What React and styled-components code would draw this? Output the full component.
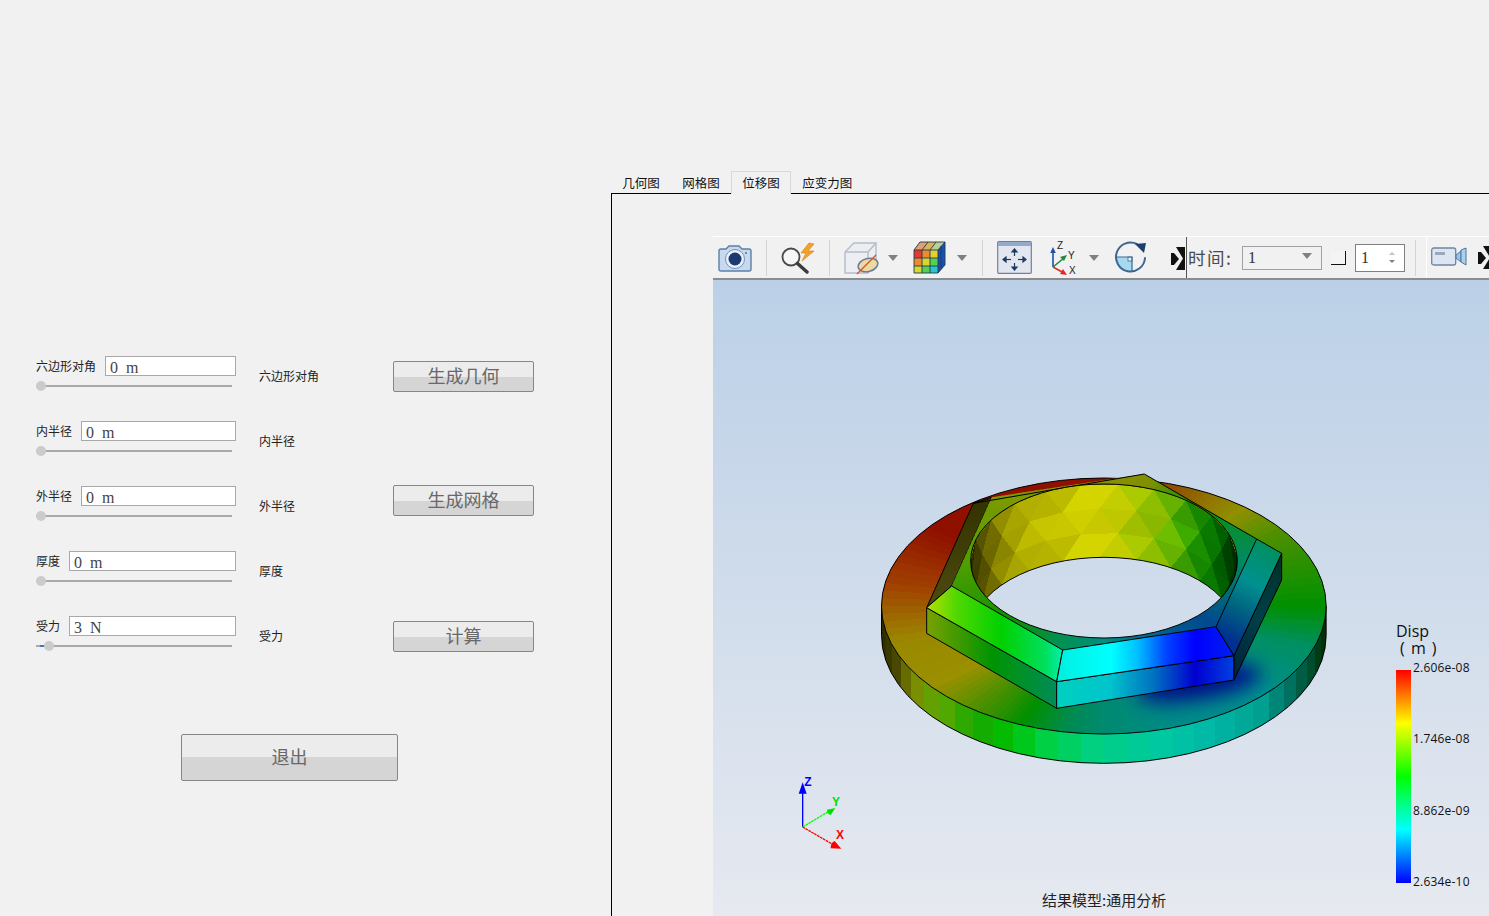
import React from 'react'
import styled, { createGlobalStyle } from 'styled-components'

const Global = createGlobalStyle`
  html, body { margin: 0; padding: 0; background: #f1f1f1; overflow: hidden; }
  body { width: 1489px; height: 916px; font-family: "Noto Sans CJK SC", "Noto Sans", sans-serif; }
`

const Page = styled.div`
  display: flex;
  width: 1489px;
  height: 916px;
  overflow: hidden;
  background: #f1f1f1;
`

/* ---------- left form ---------- */
const LeftPanel = styled.div`
  width: 611px;
  flex: none;
  padding: 356px 0 0 36px;
  box-sizing: border-box;
`
const FieldRow = styled.div`
  display: grid;
  grid-template-columns: 223px 134px 141px;
  height: 65px;
`
const FieldCol = styled.div`
  display: flex;
  flex-direction: column;
  width: 200px;
`
const FieldTop = styled.div`
  display: flex;
  align-items: center;
  gap: 9px;
`
const FieldLabel = styled.span`
  font-size: 12px;
  line-height: 20px;
  color: #222;
  white-space: nowrap;
`
const ValueInput = styled.div`
  flex: 1;
  height: 20px;
  box-sizing: border-box;
  border: 1px solid #a9a9a9;
  background: #fff;
  padding-left: 4px;
  font-family: "Liberation Serif", serif;
  font-size: 16px;
  line-height: 21px;
  color: #444;
  word-spacing: 4px;
`
const Slider = styled.div`
  position: relative;
  width: 196px;
  height: 2px;
  margin-top: 9px;
  background: #a9a9a9;
`
const SliderFill = styled.div`
  position: absolute;
  left: 4px;
  top: 0;
  width: 4px;
  height: 2px;
  background: #3a78c8;
`
const SliderHandle = styled.div`
  position: absolute;
  left: ${p => p.$left}px;
  top: -4px;
  width: 10px;
  height: 10px;
  border-radius: 50%;
  background: #cbcbcb;
`
const EchoLabel = styled.span`
  font-size: 12px;
  line-height: 16px;
  margin-top: 12px;
  color: #222;
  white-space: nowrap;
`
const PushButton = styled.div`
  display: flex;
  align-items: center;
  justify-content: center;
  width: ${p => p.$w}px;
  height: ${p => p.$h}px;
  margin-top: ${p => p.$mt || 0}px;
  margin-left: ${p => p.$ml || 0}px;
  padding-bottom: 3px;
  box-sizing: border-box;
  border: 1px solid #868686;
  border-radius: 2px;
  background: linear-gradient(#ececec 0 50%, #d5d5d5 50% 100%);
  font-size: 18px;
  line-height: 20px;
  color: #686868;
`
const ExitWrap = styled.div`
  margin-top: 53px;
`

/* ---------- right side ---------- */
const RightPanel = styled.div`
  flex: 1;
  min-width: 0;
  padding-top: 171px;
  display: flex;
  flex-direction: column;
`
const Tabs = styled.div`
  display: flex;
  height: 22px;
  flex: none;
  align-items: stretch;
`
const Tab = styled.div`
  padding: 1px 10.25px 0;
  font-size: 12.5px;
  line-height: 19px;
  color: #111;
  box-sizing: border-box;
  white-space: nowrap;
  border: 1px solid ${p => (p.$active ? '#d8d8d8' : 'transparent')};
  border-bottom: ${p => (p.$active ? '1px solid #f1f1f1' : '0')};
  margin-bottom: ${p => (p.$active ? '-1px' : '0')};
  position: relative;
  z-index: 1;
`
const TabPane = styled.div`
  flex: 1;
  border-top: 1px solid #000;
  border-left: 1px solid #000;
  padding: 42px 0 0 101px;
  display: flex;
  flex-direction: column;
  min-height: 0;
`
const Toolbar = styled.div`
  display: flex;
  align-items: center;
  height: 44px;
  flex: none;
  box-sizing: border-box;
  border-top: 1px solid #fff;
  border-bottom: 2px solid #8c8c8c;
  background: #f1f1f1;
  overflow: hidden;
`
const Tool = styled.svg`
  flex: none;
  display: block;
  margin-left: ${p => p.$ml || 0}px;
  margin-bottom: ${p => p.$mb || 0}px;
`
const Sep = styled.div`
  flex: none;
  width: 1px;
  height: 36px;
  margin-left: ${p => p.$ml}px;
  background: #d4d4d4;
`
const ToolGrip = styled.div`
  flex: none;
  width: 1px;
  height: 44px;
  margin-left: ${p => p.$ml}px;
  background: #555;
`
const TimeLabel = styled.span`
  flex: none;
  width: 44px;
  margin-left: 1px;
  font-size: 17.5px;
  line-height: 20px;
  letter-spacing: 1.5px;
  color: #4a4a4a;
  white-space: nowrap;
`
const Combo = styled.div`
  flex: none;
  display: flex;
  align-items: center;
  justify-content: space-between;
  width: 80px;
  height: 24px;
  margin-left: 10px;
  padding: 0 9px 0 5px;
  box-sizing: border-box;
  border: 1px solid #a0a0a0;
  font-family: "Liberation Serif", serif;
  font-size: 16px;
  color: #333;
`
const MiniButton = styled.div`
  flex: none;
  width: 15px;
  height: 14px;
  margin-left: 9px;
  box-sizing: border-box;
  background: #f4f4f4;
  border-right: 1px solid #111;
  border-bottom: 1px solid #111;
`
const Spin = styled.div`
  flex: none;
  display: flex;
  align-items: center;
  justify-content: space-between;
  width: 50px;
  height: 28px;
  margin-left: 9px;
  padding: 0 9px 0 5px;
  box-sizing: border-box;
  border: 1px solid #808080;
  background: #fff;
  font-family: "Liberation Serif", serif;
  font-size: 16px;
  color: #333;
`
const SpinArrows = styled.div`
  display: flex;
  flex-direction: column;
  gap: 5px;
`
const SpinArrow = styled.div`
  width: 0;
  height: 0;
  border-left: 3px solid transparent;
  border-right: 3px solid transparent;
  ${p => (p.$up ? 'border-bottom: 3px solid #c0c0c0;' : 'border-top: 3px solid #808080;')}
`
const SecondBar = styled.div`
  flex: none;
  display: flex;
  align-items: center;
  height: 42px;
  margin-left: 10px;
  padding-left: 4px;
  margin-top: -1px;
  border-left: 1px solid #fff;
`
const Viewport = styled.div`
  position: relative;
  flex: 1;
  overflow: hidden;
  background: linear-gradient(#bbd0e7, #e6e9f0);
`
const ModelSvg = styled.svg`
  position: absolute;
  left: 147px;
  top: 180px;
  width: 490px;
  height: 320px;
  overflow: visible;
`
const AxesSvg = styled.svg`
  position: absolute;
  left: 67px;
  top: 485px;
  width: 90px;
  height: 95px;
`
const Legend = styled.div`
  position: absolute;
  left: 683px;
  top: 343px;
  font-family: "Open Sans", "Noto Sans", sans-serif;
  color: #111;
`
const LegendTitle = styled.div`
  font-size: 16px;
  line-height: 17px;
`
const LegendUnit = styled.div`
  font-size: 16px;
  line-height: 17px;
  padding-left: 4px;
  word-spacing: 2px;
  white-space: pre;
`
const LegendBody = styled.div`
  display: flex;
  gap: 2px;
  margin-top: 13px;
`
const ColorBar = styled.div`
  width: 15px;
  height: 213px;
  background: linear-gradient(#ff0000 0%, #ffff00 25%, #00ff00 50%, #00ffff 75%, #0000ff 100%);
`
const LegendTicks = styled.div`
  display: flex;
  flex-direction: column;
  justify-content: space-between;
  height: 230px;
  margin-top: -10px;
  font-size: 12px;
  line-height: 16px;
  letter-spacing: .2px;
  white-space: nowrap;
`
const Caption = styled.div`
  position: absolute;
  left: 329px;
  top: 610px;
  font-size: 15px;
  line-height: 20px;
  color: #222;
  white-space: nowrap;
`

/* ---------- colour helpers for the model ---------- */
const hex = h => [1, 3, 5].map(i => parseInt(h.slice(i, i + 2), 16))
const ramp = stops => v => {
  if (v <= stops[0][0]) return hex(stops[0][1])
  for (let i = 1; i < stops.length; i++) {
    if (v <= stops[i][0]) {
      const a = stops[i - 1]
      const b = stops[i]
      const f = (v - a[0]) / (b[0] - a[0])
      const ca = hex(a[1])
      const cb = hex(b[1])
      return ca.map((c, k) => c + (cb[k] - c) * f)
    }
  }
  return hex(stops[stops.length - 1][1])
}
const rgb = (c, s = 1) => `rgb(${c.map(x => Math.min(255, Math.round(x * s))).join(',')})`

const CX = 731.5
const CY = 438
const RX = 667
const RY = 384
const HX = 732
const HY = 303
const HRX = 400
const HRY = 231
const rad = d => (d * Math.PI) / 180

const sideColor = ramp([
  [65, '#2a2a00'], [110, '#484800'], [160, '#808800'], [210, '#66a000'], [260, '#50a800'],
  [350, '#18a800'], [450, '#00c000'], [550, '#00d040'], [700, '#00d080'], [900, '#00c8a0'],
  [1050, '#00b8a8'], [1200, '#00a090'], [1290, '#007060'], [1350, '#005030'], [1398, '#002c00'],
])
const sideStrips = []
for (let t = 0; t < 180; t += 6) {
  const x1 = CX + RX * Math.cos(rad(t))
  const y1 = CY + RY * Math.sin(rad(t))
  const x2 = CX + RX * Math.cos(rad(t + 6))
  const y2 = CY + RY * Math.sin(rad(t + 6))
  sideStrips.push({ pts: `${x1},${y1} ${x2},${y2} ${x2},${y2 + 88} ${x1},${y1 + 88}`, fill: rgb(sideColor((x1 + x2) / 2)) })
}

const sectors = (cx, cy, stops, r = 1000) => {
  const color = ramp(stops)
  const out = []
  for (let a = 0; a < 360; a += 2) {
    const p1 = `${cx + r * Math.cos(rad(a))},${cy + r * Math.sin(rad(a))}`
    const p2 = `${cx + r * Math.cos(rad(a + 2.4))},${cy + r * Math.sin(rad(a + 2.4))}`
    out.push({ pts: `${cx},${cy} ${p1} ${p2}`, fill: rgb(color(a + 1)) })
  }
  return out
}
const ringSectors = sectors(CX, CY, [
  [0, '#009000'], [11, '#008f60'], [28, '#008f90'], [56, '#008a88'], [90, '#008a70'], [107, '#008a50'],
  [125, '#009000'], [142, '#509000'], [155, '#9a9000'], [170, '#9a8800'], [186, '#a04000'], [204, '#901000'],
  [270, '#901000'], [301, '#905000'], [325, '#908f00'], [337, '#509000'], [360, '#009000'],
])
const topSectors = sectors(HX, HY, [
  [0, '#008a60'], [30, '#004a90'], [60, '#006a90'], [90, '#009080'], [120, '#009050'], [150, '#109000'],
  [180, '#50a000'], [210, '#7a9a00'], [270, '#8a9000'], [300, '#809000'], [330, '#109000'], [360, '#008a60'],
])

const wallColor = ramp([
  [335, '#2c2c00'], [380, '#605c00'], [450, '#a8a400'], [530, '#bcb800'], [650, '#cccc00'], [750, '#cccc00'],
  [830, '#a8c800'], [900, '#88c000'], [970, '#40a800'], [1030, '#108800'], [1080, '#006000'], [1132, '#002000'],
])
const wallTris = []
{
  const step = 16
  const pt = (a, v) => [HX + HRX * Math.cos(rad(a)), HY + HRY * Math.sin(rad(a)) + v * 220]
  const rows = 3
  for (let r = 0; r < rows; r++) {
    const off = r % 2 ? step / 2 : 0
    for (let k = -1; k < 13; k++) {
      const a0 = 180 + k * step + off
      const A = pt(a0, r / rows)
      const B = pt(a0 + step, r / rows)
      const C = pt(a0 + step / 2, (r + 1) / rows)
      const D = pt(a0 + step * 1.5, (r + 1) / rows)
      const tris = [[A, B, C], [B, C, D]]
      tris.forEach((tri, i) => {
        const mx = (tri[0][0] + tri[1][0] + tri[2][0]) / 3
        const shade = 0.95 + 0.03 * ((k * 3 + r * 2 + i * 3 + 40) % 4)
        wallTris.push({ pts: tri.map(p => p.join(',')).join(' '), fill: rgb(wallColor(mx), shade) })
      })
    }
  }
}

const Model = () => (
  <ModelSvg viewBox="0 0 1470 960">
    <defs>
      <clipPath id="ringClip"><ellipse cx={CX} cy={CY} rx={RX} ry={RY} /></clipPath>
      <clipPath id="rimClip"><ellipse cx={HX} cy={HY} rx={HRX} ry={HRY} /></clipPath>
      <clipPath id="topClip"><polygon points="395,112 853,42 1190,237 1068,500 608,570 275,378" /></clipPath>
      <filter id="blur60" x="-50%" y="-100%" width="200%" height="300%"><feGaussianBlur stdDeviation="28" /></filter>
      <linearGradient id="sideLeft" gradientUnits="userSpaceOnUse" x1="200" y1="0" x2="590" y2="0">
        <stop offset="0" stopColor="#7aa000" /><stop offset=".5" stopColor="#009400" /><stop offset="1" stopColor="#008c58" />
      </linearGradient>
      <linearGradient id="sideFront" gradientUnits="userSpaceOnUse" x1="590" y1="0" x2="1122" y2="0">
        <stop offset="0" stopColor="#00d0c0" /><stop offset=".3" stopColor="#00c4cc" /><stop offset=".55" stopColor="#0070c0" />
        <stop offset=".78" stopColor="#0000d0" /><stop offset="1" stopColor="#0040e0" />
      </linearGradient>
      <linearGradient id="sideRight" gradientUnits="userSpaceOnUse" x1="1122" y1="660" x2="1265" y2="280">
        <stop offset="0" stopColor="#002038" /><stop offset=".5" stopColor="#004048" /><stop offset="1" stopColor="#003028" />
      </linearGradient>
      <linearGradient id="chamLeft" gradientUnits="userSpaceOnUse" x1="200" y1="0" x2="608" y2="0">
        <stop offset="0" stopColor="#b8e000" /><stop offset=".22" stopColor="#50d800" /><stop offset=".55" stopColor="#00d000" />
        <stop offset=".88" stopColor="#00e060" /><stop offset="1" stopColor="#00f0b0" />
      </linearGradient>
      <linearGradient id="chamFront" gradientUnits="userSpaceOnUse" x1="595" y1="0" x2="1122" y2="0">
        <stop offset="0" stopColor="#00f0e0" /><stop offset=".3" stopColor="#00ffff" /><stop offset=".45" stopColor="#00c0ff" />
        <stop offset=".62" stopColor="#0040ff" /><stop offset=".78" stopColor="#0000ff" /><stop offset="1" stopColor="#0020f0" />
      </linearGradient>
      <linearGradient id="chamRight" gradientUnits="userSpaceOnUse" x1="1090" y1="530" x2="1230" y2="260">
        <stop offset="0" stopColor="#003090" /><stop offset=".3" stopColor="#006080" /><stop offset=".6" stopColor="#009090" /><stop offset="1" stopColor="#009060" />
      </linearGradient>
      <linearGradient id="band" gradientUnits="userSpaceOnUse" x1="0" y1="120" x2="0" y2="440">
        <stop offset="0" stopColor="#333300" /><stop offset="1" stopColor="#4e4a10" />
      </linearGradient>
      <mask id="holeMask" maskUnits="userSpaceOnUse" x="0" y="0" width="1470" height="960">
        <rect x="0" y="0" width="1470" height="960" fill="#fff" />
        <g clipPath="url(#rimClip)">
          <ellipse cx={HX} cy={HY + 220} rx={HRX} ry={HRY} fill="#000" />
        </g>
      </mask>
    </defs>

    {/* outer wall */}
    <g shapeRendering="crispEdges">
      {sideStrips.map((s, i) => <polygon key={i} points={s.pts} fill={s.fill} />)}
    </g>
    <path d={`M${CX - RX} ${CY}V${CY + 88}A${RX} ${RY} 0 0 0 ${CX + RX} ${CY + 88}V${CY}`} fill="none" stroke="#000" strokeWidth="3" />

    <g mask="url(#holeMask)">
      {/* top of the ring */}
      <g clipPath="url(#ringClip)">
        <g shapeRendering="crispEdges">
          {ringSectors.map((s, i) => <polygon key={i} points={s.pts} fill={s.fill} />)}
        </g>
        <ellipse cx="1015" cy="668" rx="190" ry="50" fill="#000088" opacity=".9" filter="url(#blur60)" transform="rotate(-9 1015 668)" />
      </g>
      <ellipse cx={CX} cy={CY} rx={RX} ry={RY} fill="none" stroke="#000" strokeWidth="3" />

      {/* hexagon faces */}
      <g stroke="#000" strokeWidth="3" strokeLinejoin="round">
        <polygon points="200,443 590,665 590,745 200,520" fill="url(#sideLeft)" />
        <polygon points="590,665 1122,587 1122,660 590,745" fill="url(#sideFront)" />
        <polygon points="1122,587 1265,280 1265,360 1122,660" fill="url(#sideRight)" />
        <polygon points="340,130 395,112 275,378 200,443" fill="url(#band)" />
      </g>
      <g clipPath="url(#topClip)" shapeRendering="crispEdges">
        {topSectors.map((s, i) => <polygon key={i} points={s.pts} fill={s.fill} />)}
      </g>
      <g stroke="#000" strokeWidth="3" strokeLinejoin="round">
        <polygon points="200,443 275,378 608,570 590,665" fill="url(#chamLeft)" />
        <polygon points="590,665 608,570 1068,500 1122,587" fill="url(#chamFront)" />
        <polygon points="1122,587 1068,500 1190,237 1265,280" fill="url(#chamRight)" />
        <polyline points="340,130 853,42 1190,237" fill="none" />
      </g>

      {/* inner wall of the hole */}
      <g clipPath="url(#rimClip)">
        <rect x={HX - HRX} y={HY - HRY} width={HRX * 2} height={HRY * 2} fill="#808000" />
        <g shapeRendering="crispEdges">
          {wallTris.map((s, i) => <polygon key={i} points={s.pts} fill={s.fill} />)}
        </g>
      </g>
    </g>
    <ellipse cx={HX} cy={HY} rx={HRX} ry={HRY} fill="none" stroke="#000" strokeWidth="3" />
    <g clipPath="url(#rimClip)">
      <ellipse cx={HX} cy={HY + 220} rx={HRX} ry={HRY} fill="none" stroke="#000" strokeWidth="3" />
    </g>
  </ModelSvg>
)

const Axes = () => (
  <AxesSvg viewBox="0 0 270 285">
    <line x1="68" y1="186" x2="68" y2="80" stroke="#0000ff" strokeWidth="4" />
    <polygon points="68,52 80,86 56,86" fill="#0000ff" />
    <line x1="68" y1="186" x2="145" y2="140" stroke="#00ff00" strokeWidth="4" strokeDasharray="8 2" />
    <path d="M166 129 L152 150 Q140 146 141 134Z" fill="#00e000" />
    <line x1="68" y1="186" x2="158" y2="238" stroke="#ff0000" strokeWidth="4" strokeDasharray="8 2" />
    <path d="M184 251 L152 250 Q152 232 164 228Z" fill="#ff0000" />
    <text x="73" y="62" fontFamily="Liberation Sans, sans-serif" fontWeight="700" fontSize="36" fill="#0000ff">Z</text>
    <text x="156" y="122" fontFamily="Liberation Sans, sans-serif" fontWeight="700" fontSize="36" fill="#00e000">Y</text>
    <text x="168" y="222" fontFamily="Liberation Sans, sans-serif" fontWeight="700" fontSize="36" fill="#ff0000">X</text>
  </AxesSvg>
)

/* ---------- toolbar icons ---------- */
const CameraIcon = () => (
  <Tool $ml={5} width="34" height="28" viewBox="0 0 34 28">
    <path d="M1 7 Q1 5 3 5 H8 L11 2 H21 L24 5 H31 Q33 5 33 7 V25 Q33 27 31 27 H3 Q1 27 1 25Z" fill="#c6d9ee" stroke="#5d7fa6" strokeWidth="1.4" />
    <circle cx="17" cy="15" r="9.5" fill="#e9f1f9" stroke="#6f93ba" />
    <circle cx="17" cy="15" r="6.5" fill="#1b3a72" />
    <circle cx="28" cy="9" r="1" fill="#4f6f99" />
  </Tool>
)
const SearchIcon = () => (
  <Tool $ml={14} width="36" height="32" viewBox="0 0 36 32">
    <circle cx="10" cy="15" r="8.5" fill="#f4f6f8" stroke="#4a4a4a" strokeWidth="1.8" />
    <line x1="16.5" y1="21.5" x2="26" y2="30" stroke="#3c3c3c" strokeWidth="3.4" strokeLinecap="round" />
    <path d="M28 1 L20 11 L25 11 L21 19 L33 9 L27 9 L33 2Z" fill="#f2a12c" stroke="#d97a10" strokeWidth=".6" />
  </Tool>
)
const ClipCubeIcon = () => (
  <Tool $ml={14} width="35" height="34" viewBox="0 0 35 34">
    <path d="M1 11 L10 2 H32 V22 L24 32 H1Z" fill="#eceef2" stroke="#b4bccb" strokeWidth="1.4" />
    <path d="M1 11 H24 V32 M24 11 L32 2" fill="none" stroke="#b4bccb" strokeWidth="1.4" />
    <ellipse cx="24" cy="24" rx="10" ry="6.5" transform="rotate(-15 24 24)" fill="#eed9a4" stroke="#6a7f98" strokeWidth="1.6" />
    <line x1="13" y1="33" x2="32" y2="14" stroke="#d65a2c" strokeWidth="1.4" />
  </Tool>
)
const Caret = ({ ml }) => (
  <Tool $ml={ml} width="10" height="6" viewBox="0 0 10 6">
    <polygon points="0,0 10,0 5,6" fill="#808080" />
  </Tool>
)
const ColorCubeIcon = () => (
  <Tool $ml={15} width="33" height="33" viewBox="0 0 33 33">
    <polygon points="7,1 32,1 25,9 1,9" fill="#d9b25c" />
    <polygon points="7,1 15,1 9,9 1,9" fill="#e0a070" />
    <polygon points="23,1 32,1 25,9 17,9" fill="#b8d090" />
    <rect x="1" y="9" width="8" height="8" fill="#e23a2e" />
    <rect x="9" y="9" width="8" height="8" fill="#ee8a2c" />
    <rect x="17" y="9" width="8" height="8" fill="#e8d02c" />
    <rect x="1" y="17" width="8" height="8" fill="#ee8a2c" />
    <rect x="9" y="17" width="8" height="8" fill="#d8d82c" />
    <rect x="17" y="17" width="8" height="8" fill="#58d050" />
    <rect x="1" y="25" width="8" height="7" fill="#d8d82c" />
    <rect x="9" y="25" width="8" height="7" fill="#58d050" />
    <rect x="17" y="25" width="8" height="7" fill="#28c8c8" />
    <polygon points="25,9 32,1 32,24 25,32" fill="#1a50b0" />
    <path d="M1 9 H25 V32 H1Z M9 9 V32 M17 9 V32 M1 17 H25 M1 25 H25 M25 9 L32 1 V24 L25 32 M7 1 H32 M7 1 L1 9 M15 1 L9 9 M23 1 L17 9 M28 5 V28" fill="none" stroke="#233a55" strokeWidth=".9" />
  </Tool>
)
const FitIcon = () => (
  <Tool $ml={14} width="35" height="33" viewBox="0 0 35 33">
    <rect x=".7" y=".7" width="33.6" height="31.6" rx="1" fill="#e2e7ef" stroke="#6f7f9d" strokeWidth="1.2" />
    <rect x="1" y="1" width="33" height="4" fill="#94a9cc" />
    <g stroke="#1d3a60" strokeWidth="1.2" fill="#1d3a60">
      <line x1="17.5" y1="10" x2="17.5" y2="15" />
      <line x1="17.5" y1="22" x2="17.5" y2="27" />
      <line x1="8" y1="18.5" x2="14" y2="18.5" />
      <line x1="21" y1="18.5" x2="27" y2="18.5" />
      <polygon points="17.5,8 15,11 20,11" />
      <polygon points="17.5,29 15,26 20,26" />
      <polygon points="6,18.5 9,16 9,21" />
      <polygon points="29,18.5 26,16 26,21" />
    </g>
  </Tool>
)
const AxisIcon = () => (
  <Tool $ml={18} width="29" height="34" viewBox="0 0 29 34">
    <line x1="3" y1="26" x2="3" y2="11" stroke="#1f4fa8" strokeWidth="1.6" />
    <polygon points="3,6 .2,12 5.8,12" fill="#1f4fa8" />
    <line x1="3" y1="26" x2="14" y2="17" stroke="#1f8a3a" strokeWidth="1.6" />
    <polygon points="17,14 10,16 14,20" fill="#1f8a3a" />
    <line x1="3" y1="26" x2="14" y2="32" stroke="#e02a2a" strokeWidth="1.6" />
    <polygon points="17,34 10,33 13,28" fill="#e02a2a" />
    <text x="7" y="8" fontFamily="Liberation Sans, sans-serif" fontSize="10" fill="#222">Z</text>
    <text x="18" y="18" fontFamily="Liberation Sans, sans-serif" fontSize="10" fill="#222">Y</text>
    <text x="19" y="33" fontFamily="Liberation Sans, sans-serif" fontSize="10" fill="#222">X</text>
  </Tool>
)
const RotateIcon = () => (
  <Tool $ml={16} width="33" height="33" viewBox="0 0 33 33">
    <path d="M1.5 16 H17 V30 A15 14.5 0 0 1 1.5 16Z" fill="#a6d8f2" />
    <rect x="13" y="16" width="4" height="4" fill="#e8f6fc" stroke="#3c6890" strokeWidth=".8" />
    <path d="M1.5 16 H17 V30" fill="none" stroke="#3c6890" strokeWidth="1.2" />
    <path d="M22 3 A14.5 14.5 0 1 0 30 17" fill="none" stroke="#3c6890" strokeWidth="2" strokeLinecap="round" />
    <polygon points="20,3 31,2 29,12" fill="#1d3f70" />
  </Tool>
)
const MoreIcon = ({ ml, w = 14 }) => (
  <Tool $ml={ml} width={w} height="24" viewBox="0 0 14 24" preserveAspectRatio="xMinYMid slice">
    <polygon points="0,7 3,7 8,13 3,19 0,19" fill="#111" />
    <polygon points="5,1 14,1 14,24 5,24 12,12.5" fill="#111" />
  </Tool>
)
const VideoIcon = () => (
  <Tool width="36" height="20" viewBox="0 0 36 20">
    <rect x=".7" y="1" width="24" height="17" rx="2" fill="#dde5f0" stroke="#6e85a6" strokeWidth="1.3" />
    <rect x="4" y="5" width="10" height="3" fill="#9aa8bb" />
    <polygon points="25,8 30,4 30,15 25,11" fill="#9cc4e4" stroke="#4f76a0" />
    <polygon points="30,3 35,1 35,18 30,15" fill="#a9d0ee" stroke="#4f76a0" />
  </Tool>
)

const fields = [
  { label: '六边形对角', value: '0 m', left: 0, button: '生成几何', mt: 5 },
  { label: '内半径', value: '0 m', left: 0 },
  { label: '外半径', value: '0 m', left: 0, button: '生成网格', mt: -1 },
  { label: '厚度', value: '0 m', left: 0 },
  { label: '受力', value: '3 N', left: 8, fill: true, button: '计算', mt: 5 },
]

export default function App() {
  return (
    <Page>
      <Global />
      <LeftPanel>
        {fields.map(f => (
          <FieldRow key={f.label}>
            <FieldCol>
              <FieldTop>
                <FieldLabel>{f.label}</FieldLabel>
                <ValueInput>{f.value}</ValueInput>
              </FieldTop>
              <Slider>
                {f.fill && <SliderFill />}
                <SliderHandle $left={f.left} />
              </Slider>
            </FieldCol>
            <EchoLabel>{f.label}</EchoLabel>
            {f.button && <PushButton $w={141} $h={31} $mt={f.mt}>{f.button}</PushButton>}
          </FieldRow>
        ))}
        <ExitWrap>
          <PushButton $w={217} $h={47} $ml={145}>退出</PushButton>
        </ExitWrap>
      </LeftPanel>

      <RightPanel>
        <Tabs>
          <Tab>几何图</Tab>
          <Tab>网格图</Tab>
          <Tab $active>位移图</Tab>
          <Tab>应变力图</Tab>
        </Tabs>
        <TabPane>
          <Toolbar>
            <CameraIcon />
            <Sep $ml={14} />
            <SearchIcon />
            <Sep $ml={12} />
            <ClipCubeIcon />
            <Caret ml={9} />
            <ColorCubeIcon />
            <Caret ml={11} />
            <Sep $ml={15} />
            <FitIcon />
            <AxisIcon />
            <Caret ml={10} />
            <RotateIcon />
            <MoreIcon ml={23} />
            <ToolGrip $ml={1} />
            <TimeLabel>时间:</TimeLabel>
            <Combo>
              1
              <Tool $mb={3} width="10" height="6" viewBox="0 0 10 6"><polygon points="0,0 10,0 5,6" fill="#808080" /></Tool>
            </Combo>
            <MiniButton />
            <Spin>
              1
              <SpinArrows><SpinArrow $up /><SpinArrow /></SpinArrows>
            </Spin>
            <Sep $ml={10} />
            <SecondBar>
              <VideoIcon />
              <MoreIcon ml={11} w={11} />
            </SecondBar>
          </Toolbar>
          <Viewport>
            <Model />
            <Axes />
            <Legend>
              <LegendTitle>Disp</LegendTitle>
              <LegendUnit>( m )</LegendUnit>
              <LegendBody>
                <ColorBar />
                <LegendTicks>
                  <span>2.606e-08</span>
                  <span>1.746e-08</span>
                  <span>8.862e-09</span>
                  <span>2.634e-10</span>
                </LegendTicks>
              </LegendBody>
            </Legend>
            <Caption>结果模型:通用分析</Caption>
          </Viewport>
        </TabPane>
      </RightPanel>
    </Page>
  )
}
